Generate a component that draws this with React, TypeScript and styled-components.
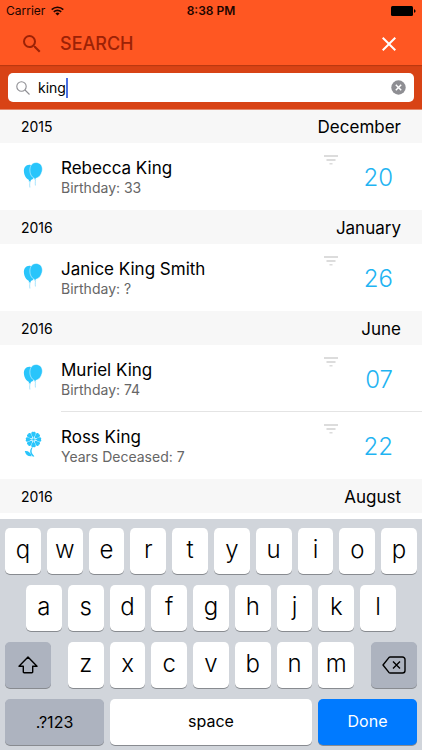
import React, { useState } from "react";
import styled, { createGlobalStyle } from "styled-components";
import { MdClose, MdSearch } from "react-icons/md";

const GlobalStyle = createGlobalStyle`
  *, *::before, *::after { box-sizing: border-box; }
  body { margin: 0; background: #fff; }
  body, button, input { font-family: Inter, "Liberation Sans", sans-serif; }
  button { border: 0; padding: 0; background: none; color: inherit; cursor: pointer; }
  h1, h2, h3, p, ul { margin: 0; padding: 0; font-weight: 400; }
  ul { list-style: none; }
  svg { display: block; flex: none; }
`;

const Screen = styled.div`
  display: flex;
  flex-direction: column;
  height: 100vh;
  overflow: hidden;
  color: #000;
`;

const StatusBar = styled.div`
  display: grid;
  grid-template-columns: 1fr auto 1fr;
  align-items: center;
  flex: none;
  height: 22px;
  padding: 0 6px;
  background: #ff5722;
  font-size: 12px;
  line-height: 22px;
  color: #1c0500;
`;

const Carrier = styled.span`
  display: flex;
  align-items: center;
  gap: 6px;
`;

const Clock = styled.span`
  font-weight: 600;
`;

const BatterySlot = styled.span`
  display: flex;
  justify-content: flex-end;
`;

const TitleBar = styled.header`
  display: flex;
  align-items: center;
  flex: none;
  height: 43px;
  padding: 0 21px 0 20px;
  background: #ff5722;
  color: #9c2206;
`;

const Title = styled.h1`
  flex: 1;
  padding-left: 16px;
  font-size: 18px;
  line-height: 24px;
  font-weight: 500;
`;

const CloseButton = styled.button`
  color: #fff;
`;

const SearchBar = styled.div`
  position: relative;
  z-index: 1;
  flex: none;
  padding: 8px 8px 7px;
  background: #d84315;
  box-shadow: inset 0 2px 1px -1px #b8380f, 0 1px 0 #e5896c;
`;

const SearchField = styled.label`
  display: flex;
  align-items: center;
  gap: 8px;
  height: 29px;
  padding: 0 8px;
  border-radius: 5px;
  background: #fff;
`;

const SearchInput = styled.input`
  flex: 1;
  min-width: 0;
  border: 0;
  outline: 0;
  padding: 0;
  background: none;
  font-size: 14px;
  line-height: 20px;
  color: #000;
  caret-color: transparent;
`;

const Typed = styled.span`
  display: flex;
  flex: 1;
  align-items: center;
  position: relative;
`;

const Caret = styled.span`
  position: absolute;
  left: 0;
  display: flex;
  font-size: 14px;
  line-height: 20px;
  color: transparent;
  pointer-events: none;
  border-right: 2px solid #4a6fe3;
`;

const Results = styled.main`
  flex: 1;
  min-height: 0;
  overflow: hidden;
`;

const MonthHeader = styled.header`
  display: flex;
  align-items: center;
  justify-content: space-between;
  height: 34px;
  padding: 2px 21px 0;
  background: #f7f7f7;
`;

const Year = styled.span`
  font-size: 14px;
  line-height: 20px;
`;

const Month = styled.h2`
  font-size: 17px;
  line-height: 24px;
`;

const EventItem = styled.li`
  display: flex;
  padding-left: 21px;
  background: #fff;
`;

const EventIcon = styled.span`
  width: 40px;
  flex: none;
  padding-top: 19px;
`;

const EventBody = styled.div<{ $divided: boolean }>`
  display: flex;
  flex: 1;
  height: 67px;
  padding-right: 29px;
  border-bottom: 1px solid ${(p) => (p.$divided ? "#e4e4e4" : "transparent")};
`;

const EventText = styled.div`
  flex: 1;
  padding-top: 14px;
`;

const Name = styled.h3`
  font-size: 17px;
  line-height: 22px;
`;

const Detail = styled.p`
  font-size: 14px;
  line-height: 18px;
  color: #666;
`;

const MenuButton = styled.button`
  align-self: flex-start;
  padding-top: 12px;
`;

const Day = styled.span`
  width: 55px;
  padding-top: 19px;
  text-align: right;
  font-size: 24px;
  line-height: 32px;
  font-weight: 300;
  color: #1fb4f2;
`;

const Keyboard = styled.section`
  display: flex;
  flex-direction: column;
  flex: none;
  gap: 11px;
  padding: 9px 5px 5px;
  background: #d1d5db;
`;

const KeyRow = styled.div<{ $inset?: number }>`
  display: flex;
  gap: 6px;
  padding: 0 ${(p) => p.$inset ?? 0}px;
`;

const LetterGroup = styled.div`
  display: flex;
  flex: 1;
  gap: 6px;
  padding: 0 11px;
`;

type Tone = "light" | "dark" | "blue";
const tones: Record<Tone, string> = { light: "#fff", dark: "#adb3bf", blue: "#007aff" };

const Key = styled.button<{ $tone?: Tone; $width?: number }>`
  display: flex;
  align-items: center;
  justify-content: center;
  flex: ${(p) => (p.$width ? `0 0 ${p.$width}px` : "1 1 0")};
  min-width: 0;
  height: 46px;
  padding-bottom: ${(p) => (p.$tone === "dark" ? 0 : 3)}px;
  border-radius: 5px;
  background: ${(p) => tones[p.$tone ?? "light"]};
  box-shadow: 0 1px 0 #888b90;
  color: ${(p) => (p.$tone === "blue" ? "#fff" : "#000")};
  font-size: 16px;
  line-height: 24px;
`;

const LetterKey = styled(Key)`
  font-size: 24px;
  line-height: 32px;
  font-weight: 300;
`;

const WifiIcon = () => (
  <svg width="13" height="10" viewBox="0 0 13 10" fill="none" stroke="#1c0500" strokeWidth="1.6">
    <path d="M.7 3.6a8.3 8.3 0 0 1 11.6 0" />
    <path d="M2.8 5.9a5.3 5.3 0 0 1 7.4 0" />
    <path d="M6.5 9.6 4.4 7.5a3 3 0 0 1 4.2 0z" fill="#1c0500" stroke="none" />
  </svg>
);

const BatteryIcon = () => (
  <svg width="25" height="10" viewBox="0 0 25 10">
    <rect width="22" height="10" rx="1.5" />
    <path d="M23 3.2c2 .4 2 3.200 0 3.600z" />
  </svg>
);

const FieldSearchIcon = () => (
  <svg width="14" height="14" viewBox="0 0 14 14" fill="none" stroke="#8e8e93" strokeWidth="1.1">
    <circle cx="5.500" cy="5.500" r="4.700" />
    <path d="m9 9 4.500 4.500" />
  </svg>
);

const ClearIcon = () => (
  <svg width="15" height="15" viewBox="0 0 15 15">
    <circle cx="7.500" cy="7.500" r="7.200" fill="#8e8e93" />
    <path d="m4.800 4.800 5.400 5.400m0-5.400-5.400 5.400" stroke="#fff" strokeWidth="1.500" />
  </svg>
);

const LinesIcon = () => (
  <svg width="14" height="10" viewBox="0 0 14 10" fill="#dcdcdc">
    <path d="M0 0h14v2H0zM2.500 4h9v2h-9zM5.500 8h3v1.600h-3z" />
  </svg>
);

const BalloonsIcon = () => (
  <svg width="24" height="28" viewBox="0 0 24 28">
    <g fill="none" stroke="#8fdcfb" strokeWidth=".8">
      <path d="M8.800 18c.5 2-.6 4 .1 7.500" />
      <path d="M14.300 16c.5 2-.4 4 .1 7.500" />
    </g>
    <path
      fill="#29c5fb"
      d="M9 2.800C5 2.400 2.600 5.600 2.900 9.600c.3 4.200 2.500 7.600 5.200 8.400l-.6 1.200h2.500l-.4-1.100c2.200-.5 3.800-2.200 4.400-4.500L12.300 4z"
    />
    <path
      fill="#29c5fb"
      stroke="#fff"
      strokeWidth=".5"
      d="M15.200.5c4.100.1 6.500 3.400 6.100 7.400-.5 4.400-3.500 8-6.500 8.400l.4 1.300h-2.400l.5-1.400C10.500 15.300 8.700 11.600 8.900 7.300 9.100 3.200 11.700.4 15.200.5z"
    />
  </svg>
);

const FlowerIcon = () => (
  <svg width="24" height="28" viewBox="0 0 24 28" fill="#29c5fb">
    {[0, 45, 90, 135, 180, 225, 270, 315].map((angle) => (
      <path
        key={angle}
        transform={`rotate(${angle} 12.500 8.500)`}
        d="M12.500 7.100C11.900 6 10.200 3.700 10.200 2.200 10.300.8 11.700.2 12.500 1.100c.8-.9 2.200-.3 2.300 1.100 0 1.500-1.700 3.800-2.300 4.900z"
      />
    ))}
    <circle cx="12.500" cy="8.500" r="1.200" />
    <path d="M11.700 16.500c-1.800 3-1.500 5.800 1.700 8.700l-1.400.5c-3.300-2.900-3.600-6.200-1.400-9.200z" />
    <path d="M3.800 20c3.600-.4 5.900 1.600 6.900 5.200-3.700.3-6.300-1.300-6.900-5.200z" />
  </svg>
);

const ShiftIcon = () => (
  <svg width="20" height="18" viewBox="0 0 20 18" fill="none" stroke="#000" strokeWidth="1.400" strokeLinejoin="round">
    <path d="M10 1 19 10.300h-4.300V16a.8.8 0 0 1-.8.800H6.100a.8.8 0 0 1-.8-.8v-5.700H1z" />
  </svg>
);

const DeleteIcon = () => (
  <svg width="24" height="18" viewBox="0 0 24 18" fill="none" stroke="#000" strokeWidth="1.400" strokeLinejoin="round">
    <path d="M8.300 1H20.500a2.500 2.500 0 0 1 2.500 2.500v11a2.500 2.500 0 0 1-2.500 2.500H8.300a2 2 0 0 1-1.400-.6L1 9l5.900-7.400A2 2 0 0 1 8.300 1z" />
    <path d="m11 5.500 7 7m0-7-7 7" />
  </svg>
);

type Kind = "birthday" | "memorial";
interface Entry {
  name: string;
  detail: string;
  day: string;
  kind: Kind;
}
interface MonthGroup {
  year: string;
  month: string;
  entries: Entry[];
}

const months: MonthGroup[] = [
  { year: "2015", month: "December", entries: [{ name: "Rebecca King", detail: "Birthday: 33", day: "20", kind: "birthday" }] },
  { year: "2016", month: "January", entries: [{ name: "Janice King Smith", detail: "Birthday: ?", day: "26", kind: "birthday" }] },
  {
    year: "2016",
    month: "June",
    entries: [
      { name: "Muriel King", detail: "Birthday: 74", day: "07", kind: "birthday" },
      { name: "Ross King", detail: "Years Deceased: 7", day: "22", kind: "memorial" },
    ],
  },
  { year: "2016", month: "August", entries: [] },
];

const Letters = ({ keys, onPress }: { keys: string; onPress: (key: string) => void }) => (
  <>
    {keys.split("").map((k) => (
      <LetterKey key={k} type="button" onClick={() => onPress(k)}>
        {k}
      </LetterKey>
    ))}
  </>
);

export default function App() {
  const [query, setQuery] = useState("king");
  const press = (key: string) => setQuery((q) => q + key);

  return (
    <Screen>
      <GlobalStyle />
      <StatusBar>
        <Carrier>
          Carrier <WifiIcon />
        </Carrier>
        <Clock>8:38 PM</Clock>
        <BatterySlot>
          <BatteryIcon />
        </BatterySlot>
      </StatusBar>
      <TitleBar>
        <MdSearch size={24} />
        <Title>SEARCH</Title>
        <CloseButton type="button" aria-label="Close">
          <MdClose size={24} />
        </CloseButton>
      </TitleBar>
      <SearchBar>
        <SearchField>
          <FieldSearchIcon />
          <Typed>
            <SearchInput aria-label="Search" value={query} onChange={(e) => setQuery(e.target.value)} />
            <Caret aria-hidden="true">{query}</Caret>
          </Typed>
          <button type="button" aria-label="Clear" onClick={() => setQuery("")}>
            <ClearIcon />
          </button>
        </SearchField>
      </SearchBar>
      <Results>
        {months.map((group) => (
          <section key={group.month}>
            <MonthHeader>
              <Year>{group.year}</Year>
              <Month>{group.month}</Month>
            </MonthHeader>
            <ul>
              {group.entries.map((entry, i) => (
                <EventItem key={entry.name}>
                  <EventIcon>{entry.kind === "birthday" ? <BalloonsIcon /> : <FlowerIcon />}</EventIcon>
                  <EventBody $divided={i < group.entries.length - 1}>
                    <EventText>
                      <Name>{entry.name}</Name>
                      <Detail>{entry.detail}</Detail>
                    </EventText>
                    <MenuButton type="button" aria-label={`Options for ${entry.name}`}>
                      <LinesIcon />
                    </MenuButton>
                    <Day>{entry.day}</Day>
                  </EventBody>
                </EventItem>
              ))}
            </ul>
          </section>
        ))}
      </Results>
      <Keyboard aria-label="Keyboard">
        <KeyRow>
          <Letters keys="qwertyuiop" onPress={press} />
        </KeyRow>
        <KeyRow $inset={21}>
          <Letters keys="asdfghjkl" onPress={press} />
        </KeyRow>
        <KeyRow>
          <Key type="button" $tone="dark" $width={46} aria-label="Shift">
            <ShiftIcon />
          </Key>
          <LetterGroup>
            <Letters keys="zxcvbnm" onPress={press} />
          </LetterGroup>
          <Key type="button" $tone="dark" $width={46} aria-label="Delete" onClick={() => setQuery((q) => q.slice(0, -1))}>
            <DeleteIcon />
          </Key>
        </KeyRow>
        <KeyRow>
          <Key type="button" $tone="dark" $width={99}>
            .?123
          </Key>
          <Key type="button" onClick={() => press(" ")}>
            space
          </Key>
          <Key type="button" $tone="blue" $width={99}>
            Done
          </Key>
        </KeyRow>
      </Keyboard>
    </Screen>
  );
}
